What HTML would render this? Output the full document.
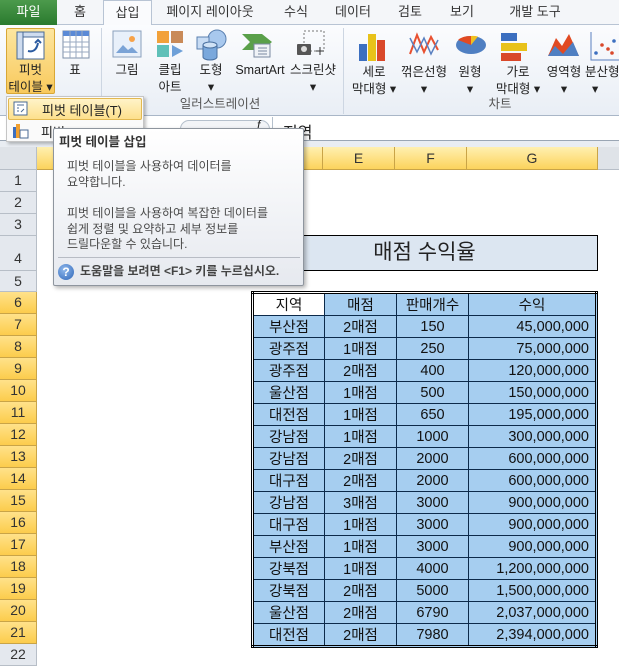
<!DOCTYPE html>
<html><head><meta charset="utf-8"><style>
*{margin:0;padding:0;box-sizing:border-box}
body{width:619px;height:657px;overflow:hidden;background:#fff;font-family:"Liberation Sans","Noto Sans CJK KR",sans-serif;position:relative;font-size:13px;color:#222}
.a{position:absolute}
.tab{position:absolute;top:0;height:25px;line-height:24px;font-size:13px;color:#333;text-align:center}
.lbl{position:absolute;font-size:12.5px;text-align:center;line-height:17px;color:#222}
.rh{position:absolute;left:0;width:37px;text-align:center;font-size:14px;color:#333;border-bottom:1px solid #c9a447;background:linear-gradient(#ffe28a,#fccc4c);border-right:1px solid #c9a447}
.ch{position:absolute;top:147px;height:23px;line-height:22px;text-align:center;font-size:14px;color:#333;background:linear-gradient(#fff0b0,#fcd35c);border-right:1px solid #c9a447;border-bottom:1px solid #c9a447}
table{position:absolute;left:251px;top:291px;border-collapse:collapse;border:3px double #000;font-size:14.5px}
td{border:1px solid #0c2a4a;background:#a6cef0;height:22px;padding:0 6px;text-align:center;color:#111}
td.r{text-align:right}
</style></head><body>
<!-- tab bar -->
<div class="a" style="left:0;top:0;width:619px;height:25px;background:#f4f6f9;border-bottom:1px solid #b8c4d4"></div>
<div class="tab" style="left:0;width:57px;background:linear-gradient(#4c9a4c,#2a7a2e);color:#fff">파일</div>
<div class="tab" style="left:60px;width:40px">홈</div>
<div class="tab" style="left:103px;width:49px;background:#fafbfd;border:1px solid #b8c4d4;border-bottom:none;height:26px">삽입</div>
<div class="tab" style="left:160px;width:100px">페이지 레이아웃</div>
<div class="tab" style="left:276px;width:40px">수식</div>
<div class="tab" style="left:328px;width:50px">데이터</div>
<div class="tab" style="left:390px;width:40px">검토</div>
<div class="tab" style="left:442px;width:40px">보기</div>
<div class="tab" style="left:500px;width:70px">개발 도구</div>
<!-- ribbon body -->
<div class="a" style="left:0;top:25px;width:619px;height:91px;background:linear-gradient(#fbfcfe,#e9eef5);border-bottom:1px solid #a9b6c7"></div>
<div class="a" style="left:101px;top:28px;width:1px;height:86px;background:#cdd6e2"></div>
<div class="a" style="left:343px;top:28px;width:1px;height:86px;background:#cdd6e2"></div>
<!-- pivot button highlighted -->
<div class="a" style="left:6px;top:28px;width:49px;height:66px;border:1px solid #d8a736;background:linear-gradient(#fde6a0,#f8c95c);border-radius:2px"></div>
<svg class="a" style="left:16px;top:31px" width="30" height="30"><rect x="1" y="1" width="27" height="27" fill="#fff" stroke="#4a6a94"/><rect x="1" y="1" width="27" height="5" fill="#cfdcef" stroke="#4a6a94"/><rect x="1" y="1" width="6" height="27" fill="#cfdcef" stroke="#4a6a94"/><path d="M12 20 q8 2 10-8" stroke="#2a5aa0" stroke-width="2" fill="none"/><path d="M19 12 l3-3 3 3" stroke="#2a5aa0" stroke-width="2" fill="none"/></svg>
<div class="lbl" style="left:6px;top:62px;width:49px">피벗<br>테이블 ▾</div>
<svg class="a" style="left:62px;top:30px" width="28" height="30"><rect x="1" y="1" width="26" height="27" fill="#fff" stroke="#7d8fa8"/><rect x="1" y="1" width="26" height="5" fill="#5b8ad6"/><path d="M1 12h26M1 17h26M1 22h26M8 1v27M14 1v27M20 1v27" stroke="#9aaac0"/></svg>
<div class="lbl" style="left:62px;top:62px;width:26px">표</div>
<svg class="a" style="left:112px;top:30px" width="30" height="28"><rect x="1" y="1" width="28" height="26" fill="#e8f0fa" stroke="#8aa0bc"/><path d="M4 23 l7-8 5 5 4-3 6 6z" fill="#7aa3d6"/><circle cx="20" cy="9" r="3" fill="#f7a248"/></svg>
<div class="lbl" style="left:108px;top:62px;width:38px">그림</div>
<svg class="a" style="left:156px;top:30px" width="28" height="28"><rect x="1" y="1" width="12" height="12" fill="#f2a13a"/><rect x="15" y="1" width="12" height="12" fill="#c98a58"/><rect x="1" y="15" width="12" height="12" fill="#5fc0b8"/><path d="M16 15 l11 6 -11 6z" fill="#6ea0d8"/></svg>
<div class="lbl" style="left:150px;top:62px;width:40px">클립<br>아트</div>
<svg class="a" style="left:195px;top:29px" width="34" height="32"><circle cx="22" cy="10" r="9" fill="#a8c8ee" stroke="#5a80b0"/><rect x="2" y="8" width="12" height="12" fill="#c8dcf4" stroke="#5a80b0"/><path d="M8 16 v12 a7 3 0 0 0 14 0 v-12" fill="#7aa8dc" stroke="#4a70a0"/><ellipse cx="15" cy="16" rx="7" ry="3" fill="#d0e2f6" stroke="#4a70a0"/></svg>
<div class="lbl" style="left:193px;top:62px;width:36px">도형<br>▾</div>
<svg class="a" style="left:240px;top:31px" width="34" height="28"><path d="M2 3 h20 l10 8 -10 8 h-20 l8 -8z" fill="#5aa04a"/><rect x="14" y="13" width="16" height="13" fill="#f0f3f7" stroke="#7a8aa0"/><path d="M18 17h9M18 20h9M18 23h9" stroke="#7a8aa0"/></svg>
<div class="lbl" style="left:233px;top:62px;width:54px">SmartArt</div>
<svg class="a" style="left:296px;top:30px" width="30" height="28"><rect x="8" y="1" width="20" height="20" fill="none" stroke="#777" stroke-dasharray="2 2"/><rect x="1" y="14" width="14" height="11" fill="#555" rx="1"/><circle cx="8" cy="19" r="3" fill="#ddd"/><path d="M24 17v8M20 21h8" stroke="#333"/></svg>
<div class="lbl" style="left:286px;top:62px;width:54px">스크린샷<br>▾</div>
<div class="lbl" style="left:150px;top:96px;width:140px;color:#555">일러스트레이션</div>
<!-- charts -->
<svg class="a" style="left:356px;top:32px" width="34" height="30"><rect x="3" y="12" width="8" height="17" fill="#3c6fc0"/><rect x="12" y="2" width="8" height="27" fill="#e8c21a"/><rect x="21" y="8" width="8" height="21" fill="#d9482a"/></svg>
<div class="lbl" style="left:350px;top:64px;width:48px">세로<br>막대형 ▾</div>
<svg class="a" style="left:408px;top:32px" width="32" height="26"><path d="M2 22 L9 3 L16 20 L23 5 L30 18" stroke="#e85030" stroke-width="2" fill="none"/><path d="M2 6 L9 20 L16 6 L23 22 L30 8" stroke="#5a80c0" stroke-width="1.5" fill="none"/></svg>
<div class="lbl" style="left:398px;top:64px;width:52px">꺾은선형<br>▾</div>
<svg class="a" style="left:454px;top:34px" width="34" height="22"><ellipse cx="17" cy="11" rx="15" ry="9" fill="#4f7fc2"/><path d="M17 11 L4 6 A15 9 0 0 1 17 2z" fill="#e14a22"/><path d="M17 11 L17 2 A15 9 0 0 1 24 2.5z" fill="#f0c020"/></svg>
<div class="lbl" style="left:452px;top:64px;width:36px">원형<br>▾</div>
<svg class="a" style="left:500px;top:31px" width="30" height="32"><rect x="1" y="2" width="16" height="8" fill="#3c6fc0"/><rect x="1" y="12" width="26" height="8" fill="#e8c21a"/><rect x="1" y="22" width="20" height="8" fill="#d9482a"/></svg>
<div class="lbl" style="left:494px;top:64px;width:48px">가로<br>막대형 ▾</div>
<svg class="a" style="left:547px;top:32px" width="34" height="26"><path d="M1 24 L9 6 L15 14 L22 2 L32 24z" fill="#e14a22"/><path d="M1 24 L8 14 L16 22 L26 10 L32 24z" fill="#4f7fc2"/></svg>
<div class="lbl" style="left:544px;top:64px;width:40px">영역형<br>▾</div>
<svg class="a" style="left:590px;top:31px" width="29" height="30"><path d="M1 1 v28 h28" stroke="#5a80c0" fill="none"/><circle cx="6" cy="22" r="1.8" fill="#3c6fc0"/><circle cx="12" cy="14" r="1.8" fill="#d9482a"/><circle cx="18" cy="18" r="1.8" fill="#d9482a"/><circle cx="24" cy="10" r="1.8" fill="#3c6fc0"/><circle cx="22" cy="22" r="1.8" fill="#d9482a"/></svg>
<div class="lbl" style="left:585px;top:64px;width:40px;text-align:left">분산형<br>&nbsp;&nbsp;▾</div>
<div class="lbl" style="left:470px;top:96px;width:60px;color:#555">차트</div>
<!-- formula bar -->
<div class="a" style="left:0;top:117px;width:619px;height:24px;background:#fff;border-bottom:1px solid #9aa6b4"></div>
<div class="a" style="left:180px;top:120px;width:90px;height:18px;border:1px solid #b5c0cc;border-radius:9px;background:#f2f4f7"></div>
<div class="a" style="left:257px;top:118px;font-size:12px;font-style:italic">f</div>
<div class="a" style="left:272px;top:117px;width:1px;height:24px;background:#b5c0cc"></div>
<div class="a" style="left:283px;top:119px;font-size:16px">지역</div>
<div class="a" style="left:0;top:141px;width:619px;height:6px;background:#e9edf2"></div>
<!-- grid -->
<div class="a" style="left:0;top:147px;width:37px;height:23px;background:#dfe3e8;border-right:1px solid #b7bec7;border-bottom:1px solid #b7bec7"></div>
<div class="ch" style="left:37px;width:213px;background:linear-gradient(#fff0b0,#fcd35c)"></div>
<div class="ch" style="left:250px;width:73px">D</div>
<div class="ch" style="left:323px;width:72px">E</div>
<div class="ch" style="left:395px;width:72px">F</div>
<div class="ch" style="left:467px;width:131px">G</div>
<div class="a" style="left:598px;top:147px;width:21px;height:23px;background:#dfe3e8;border-bottom:1px solid #b7bec7"></div>
<div id="rows"></div>
<div class="rh" style="top:170px;height:22px;line-height:21px;background:#e4e8ee;border-color:#b7bec7">1</div>
<div class="rh" style="top:192px;height:22px;line-height:21px;background:#e4e8ee;border-color:#b7bec7">2</div>
<div class="rh" style="top:214px;height:22px;line-height:21px;background:#e4e8ee;border-color:#b7bec7">3</div>
<div class="rh" style="top:236px;height:35px;line-height:44px;background:#e4e8ee;border-color:#b7bec7">4</div>
<div class="rh" style="top:271px;height:21px;line-height:21px;background:#e4e8ee;border-color:#b7bec7">5</div>
<div class="rh" style="top:292px;height:22px;line-height:21px">6</div>
<div class="rh" style="top:314px;height:22px;line-height:21px">7</div>
<div class="rh" style="top:336px;height:22px;line-height:21px">8</div>
<div class="rh" style="top:358px;height:22px;line-height:21px">9</div>
<div class="rh" style="top:380px;height:22px;line-height:21px">10</div>
<div class="rh" style="top:402px;height:22px;line-height:21px">11</div>
<div class="rh" style="top:424px;height:22px;line-height:21px">12</div>
<div class="rh" style="top:446px;height:22px;line-height:21px">13</div>
<div class="rh" style="top:468px;height:22px;line-height:21px">14</div>
<div class="rh" style="top:490px;height:22px;line-height:21px">15</div>
<div class="rh" style="top:512px;height:22px;line-height:21px">16</div>
<div class="rh" style="top:534px;height:22px;line-height:21px">17</div>
<div class="rh" style="top:556px;height:22px;line-height:21px">18</div>
<div class="rh" style="top:578px;height:22px;line-height:21px">19</div>
<div class="rh" style="top:600px;height:22px;line-height:21px">20</div>
<div class="rh" style="top:622px;height:22px;line-height:21px">21</div>
<div class="rh" style="top:644px;height:22px;line-height:21px;background:#e4e8ee;border-color:#b7bec7">22</div>
<!-- title -->
<div class="a" style="left:251px;top:235px;width:347px;height:36px;background:#dce6f1;border:1px solid #000;text-align:center;line-height:34px;font-size:21px">매점 수익율</div>
<table>
<tr><td style="width:72px;background:#fff">지역</td><td style="width:72px">매점</td><td style="width:72px">판매개수</td><td style="width:128px">수익</td></tr>
<tr><td>부산점</td><td>2매점</td><td>150</td><td class="r">45,000,000</td></tr>
<tr><td>광주점</td><td>1매점</td><td>250</td><td class="r">75,000,000</td></tr>
<tr><td>광주점</td><td>2매점</td><td>400</td><td class="r">120,000,000</td></tr>
<tr><td>울산점</td><td>1매점</td><td>500</td><td class="r">150,000,000</td></tr>
<tr><td>대전점</td><td>1매점</td><td>650</td><td class="r">195,000,000</td></tr>
<tr><td>강남점</td><td>1매점</td><td>1000</td><td class="r">300,000,000</td></tr>
<tr><td>강남점</td><td>2매점</td><td>2000</td><td class="r">600,000,000</td></tr>
<tr><td>대구점</td><td>2매점</td><td>2000</td><td class="r">600,000,000</td></tr>
<tr><td>강남점</td><td>3매점</td><td>3000</td><td class="r">900,000,000</td></tr>
<tr><td>대구점</td><td>1매점</td><td>3000</td><td class="r">900,000,000</td></tr>
<tr><td>부산점</td><td>1매점</td><td>3000</td><td class="r">900,000,000</td></tr>
<tr><td>강북점</td><td>1매점</td><td>4000</td><td class="r">1,200,000,000</td></tr>
<tr><td>강북점</td><td>2매점</td><td>5000</td><td class="r">1,500,000,000</td></tr>
<tr><td>울산점</td><td>2매점</td><td>6790</td><td class="r">2,037,000,000</td></tr>
<tr><td>대전점</td><td>2매점</td><td>7980</td><td class="r">2,394,000,000</td></tr>
</table>
<!-- dropdown menu -->
<div class="a" style="left:6px;top:96px;width:138px;height:46px;background:#fafafa;border:1px solid #c5c5c5;box-shadow:2px 2px 3px rgba(0,0,0,.25)"></div>
<div class="a" style="left:8px;top:98px;width:134px;height:22px;border:1px solid #e2b850;border-radius:2px;background:linear-gradient(#fff3c8,#fde08c)"></div>
<svg class="a" style="left:13px;top:101px" width="16" height="16"><rect x="1" y="1" width="13" height="13" fill="#fff" stroke="#4a6a94"/><path d="M4 4h7M4 7h2M4 10h2M8 11l3-3" stroke="#4a6a94"/></svg>
<div class="a" style="left:42px;top:100px;font-size:13px">피벗 테이블(T)</div>
<svg class="a" style="left:12px;top:123px" width="18" height="16"><rect x="1" y="4" width="4" height="11" fill="#3c6fc0"/><rect x="4" y="1" width="4" height="14" fill="#f0a030"/><rect x="8" y="7" width="8" height="8" fill="#fff" stroke="#4a6a94"/></svg>
<div class="a" style="left:41px;top:122px;font-size:13px">피벗</div>
<!-- tooltip -->
<div class="a" style="left:53px;top:128px;width:251px;height:158px;background:linear-gradient(#fff,#e6e9ef);border:1px solid #8e959e;border-radius:2px;box-shadow:2px 2px 4px rgba(0,0,0,.3);font-size:12px;color:#4a4a4a;line-height:15.5px">
<div class="a" style="left:5px;top:6px;font-weight:bold;color:#333;font-size:12.5px">피벗 테이블 삽입</div>
<div class="a" style="left:13px;top:30px;width:235px">피벗 테이블을 사용하여 데이터를<br>요약합니다.</div>
<div class="a" style="left:13px;top:77px;width:235px">피벗 테이블을 사용하여 복잡한 데이터를<br>쉽게 정렬 및 요약하고 세부 정보를<br>드릴다운할 수 있습니다.</div>
<div class="a" style="left:4px;top:128px;width:242px;height:1px;background:#b8bcc4"></div>
<div class="a" style="left:4px;top:135px;width:16px;height:16px;border-radius:50%;background:radial-gradient(circle at 40% 35%,#8fb8ec,#2f66b8);color:#fff;font-weight:bold;font-size:12px;text-align:center;line-height:16px">?</div>
<div class="a" style="left:26px;top:135px;font-weight:bold;color:#444;white-space:nowrap">도움말을 보려면 &lt;F1&gt; 키를 누르십시오.</div>
</div>
</body></html>
